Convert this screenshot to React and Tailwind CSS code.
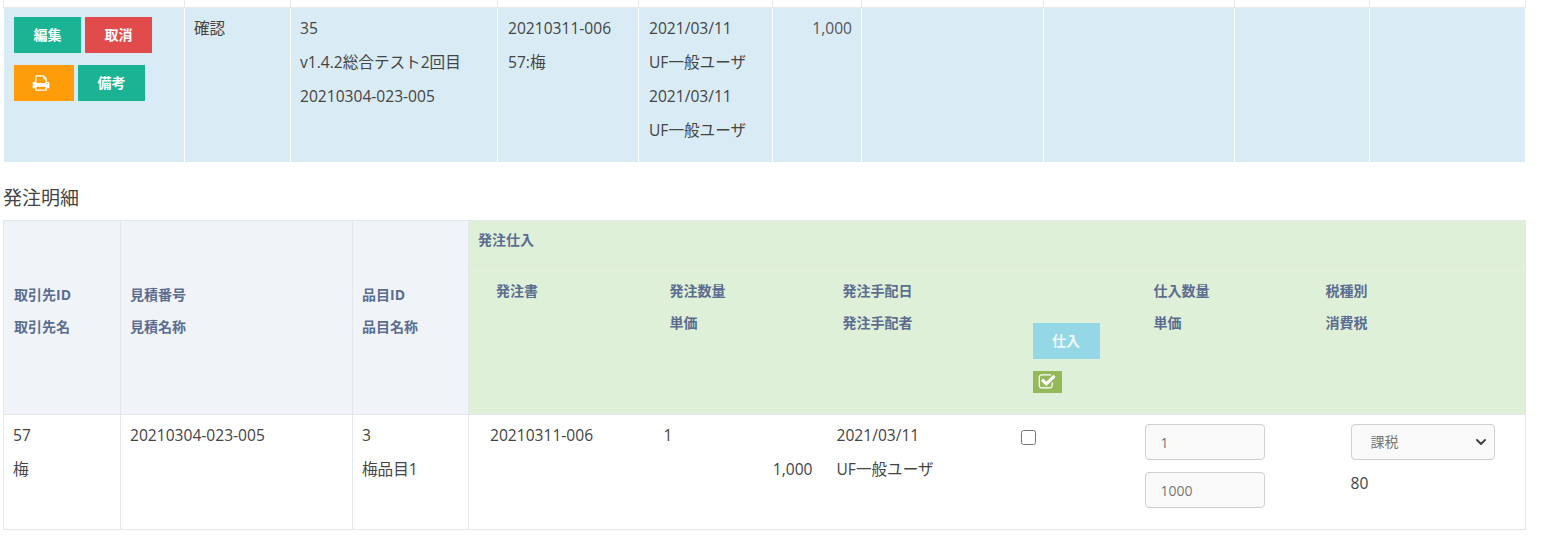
import React from 'react';
import { ChevronDown } from 'lucide-react';

const FONT = "font-['Open_Sans','Noto_Sans_CJK_JP',sans-serif]";

const PrintIcon = () => (
    <svg viewBox="0 0 1792 1792" className="size-[18px]" fill="currentColor">
        <path d="M448 1536h896v-256h-896v256zm0-640h896v-384h-160q-40 0-68-28t-28-68v-160h-640v640zm1152 64q0-26-19-45t-45-19-45 19-19 45 19 45 45 19 45-19 19-45zm128 0v416q0 13-9.5 22.5t-22.5 9.5h-224v160q0 40-28 68t-68 28h-960q-40 0-68-28t-28-68v-160h-224q-13 0-22.5-9.5t-9.5-22.5v-416q0-79 56.5-135.5t135.5-56.5h64v-544q0-40 28-68t68-28h672q40 0 88 20t76 48l152 152q28 28 48 76t20 88v256h64q79 0 135.5 56.5t56.5 135.5z" />
    </svg>
);

const CheckIcon = () => (
    <svg viewBox="0 0 1792 1792" className="size-[18px]" fill="currentColor">
        <path d="M1472 930v318q0 119-84.5 203.5t-203.5 84.5h-832q-119 0-203.5-84.5t-84.5-203.5v-832q0-119 84.5-203.5t203.5-84.5h832q63 0 117 25 15 7 18 23 3 17-9 29l-49 49q-10 10-23 10-3 0-9-2-23-6-45-6h-832q-66 0-113 47t-47 113v832q0 66 47 113t113 47h832q66 0 113-47t47-113v-254q0-13 9-22l64-64q10-10 23-10 6 0 12 3 20 8 20 29zm231-489l-814 814q-24 24-57 24t-57-24l-430-430q-24-24-24-57t24-57l110-110q24-24 57-24t57 24l263 263 647-647q24-24 57-24t57 24l110 110q24 24 24 57t-24 57z" />
    </svg>
);

const Btn = ({ className, children }) => (
    <button className={`h-9 flex items-center justify-center text-white text-sm font-bold ${className}`}>
        {children}
    </button>
);

const topWidths = [181, 106, 207, 141, 134, 89, 182, 191, 135, 156];
const detailWidths = [117, 232, 116, 173, 173, 191, 120, 173, 227];

const blueCell = "border-x border-white align-top pt-[3px] pl-[10px] pr-[9px] leading-[34px]";
const sideHead = "border border-[#e3e6ea] bg-[#f0f4f9] align-middle text-left pr-2 pb-[14px] leading-[32px] text-sm font-bold text-[#5a6d90]";
const greenHead = "bg-[#dff0d8] align-top text-left pt-1 leading-[32px] text-sm font-bold text-[#5a6d90]";
const bodyCell = "align-top pt-[3px] leading-[34px]";
const field = "block h-9 border border-[#cfcfcf] rounded-[4px] bg-[#f9f9f9] text-sm text-[#777] outline-none";

function Colgroup({ widths }) {
    return (
        <colgroup>
            {widths.map((w, i) => (
                <col key={i} style={{ width: w }} />
            ))}
        </colgroup>
    );
}

export default function App() {
    return (
        <div className={`${FONT} bg-white min-h-[536px] pl-[3px] text-[15.6px] text-[#444]`}>
            <table className="table-fixed border-collapse w-[1522px]">
                <Colgroup widths={topWidths} />
                <tbody>
                    <tr className="h-[7px]">
                        {topWidths.map((_, i) => (
                            <td key={i} className="border-x border-b border-[#e7eaec] p-0"></td>
                        ))}
                    </tr>
                    <tr className="h-[155px] bg-[#d9ecf5]">
                        <td className="border-x border-white align-top pt-[9px] pl-[10px]">
                            <div className="flex gap-1">
                                <Btn className="w-[67px] bg-[#1ab394]">編集</Btn>
                                <Btn className="w-[67px] bg-[#e14b4b]">取消</Btn>
                            </div>
                            <div className="flex gap-1 mt-3">
                                <Btn className="w-[60px] pr-[6px] bg-[#ff9c0a]"><PrintIcon /></Btn>
                                <Btn className="w-[67px] bg-[#1ab394]">備考</Btn>
                            </div>
                        </td>
                        <td className="border-x border-white align-top pt-[3px] pl-[9px] leading-[34px]">確認</td>
                        <td className="border-x border-white align-top pt-[3px] pl-[9px] leading-[34px]">
                            <div>35</div>
                            <div>v1.4.2総合テスト2回目</div>
                            <div>20210304-023-005</div>
                        </td>
                        <td className={blueCell}>
                            <div>20210311-006</div>
                            <div>57:梅</div>
                        </td>
                        <td className={blueCell}>
                            <div>2021/03/11</div>
                            <div>UF一般ユーザ</div>
                            <div>2021/03/11</div>
                            <div>UF一般ユーザ</div>
                        </td>
                        <td className={`${blueCell} text-right text-[#555]`}>1,000</td>
                        <td className={blueCell}></td>
                        <td className={blueCell}></td>
                        <td className={blueCell}></td>
                        <td className={blueCell}></td>
                    </tr>
                </tbody>
            </table>

            <h3 className="mt-[22px] mb-2 text-[19px] leading-[28px] font-normal text-[#444]">発注明細</h3>

            <table className="table-fixed border-collapse w-[1522px]">
                <Colgroup widths={detailWidths} />
                <thead>
                    <tr className="h-[50px]">
                        <th rowSpan={2} className={`${sideHead} pl-[10px]`}>
                            <div>取引先ID</div>
                            <div>取引先名</div>
                        </th>
                        <th rowSpan={2} className={`${sideHead} pl-[9px]`}>
                            <div>見積番号</div>
                            <div>見積名称</div>
                        </th>
                        <th rowSpan={2} className={`${sideHead} pl-[9px]`}>
                            <div>品目ID</div>
                            <div>品目名称</div>
                        </th>
                        <th colSpan={6} className="border-t border-r border-b border-t-[#e3e6ea] border-r-[#e3e6ea] border-b-[#e6efe2] bg-[#dff0d8] align-top text-left pt-[3px] pl-[9px] leading-[32px] text-sm font-bold text-[#5a6d90]">
                            発注仕入
                        </th>
                    </tr>
                    <tr className="h-[144px]">
                        <th className={`${greenHead} pl-[27px]`}>発注書</th>
                        <th className={`${greenHead} pl-7`}>
                            <div>発注数量</div>
                            <div>単価</div>
                        </th>
                        <th className={`${greenHead} pl-7`}>
                            <div>発注手配日</div>
                            <div>発注手配者</div>
                        </th>
                        <th className="bg-[#dff0d8] align-top pt-[52px] pl-[27px]">
                            <button className="block w-[67px] h-9 bg-[#94d7e7] text-[#eef9fb] text-sm font-bold">仕入</button>
                            <button className="mt-3 flex items-center justify-center w-[29px] h-[22px] bg-[#94b85a] text-white">
                                <CheckIcon />
                            </button>
                        </th>
                        <th className={`${greenHead} pl-7`}>
                            <div>仕入数量</div>
                            <div>単価</div>
                        </th>
                        <th className={`${greenHead} pl-[27px] border-r border-r-[#e3e6ea]`}>
                            <div>税種別</div>
                            <div>消費税</div>
                        </th>
                    </tr>
                </thead>
                <tbody>
                    <tr className="h-[115px]">
                        <td className={`${bodyCell} border border-[#e3e6ea] pl-[9px]`}>
                            <div>57</div>
                            <div>梅</div>
                        </td>
                        <td className={`${bodyCell} border border-[#e3e6ea] pl-[9px]`}>20210304-023-005</td>
                        <td className={`${bodyCell} border border-[#e3e6ea] pl-[9px]`}>
                            <div>3</div>
                            <div>梅品目1</div>
                        </td>
                        <td className={`${bodyCell} border-y border-l border-[#e3e6ea] pl-[21px]`}>20210311-006</td>
                        <td className={`${bodyCell} border-y border-[#e3e6ea] pl-[22px] pr-[2px]`}>
                            <div>1</div>
                            <div className="text-right">1,000</div>
                        </td>
                        <td className={`${bodyCell} border-y border-[#e3e6ea] pl-[22px]`}>
                            <div>2021/03/11</div>
                            <div>UF一般ユーザ</div>
                        </td>
                        <td className="border-y border-[#e3e6ea] align-top pt-[15px] pl-[15px]">
                            <input type="checkbox" className="block size-[15px]" />
                        </td>
                        <td className="border-y border-[#e3e6ea] align-top pt-[9px] pl-[19px]">
                            <input readOnly value="1" className={`${field} w-[120px] pl-[15px]`} />
                            <input readOnly value="1000" className={`${field} w-[120px] pl-[15px] mt-3`} />
                        </td>
                        <td className="border-y border-r border-[#e3e6ea] align-top pt-[9px] pl-[52px]">
                            <div className="relative w-[144px]">
                                <select className={`${field} w-full pl-[19px] appearance-none`} defaultValue="課税">
                                    <option>課税</option>
                                </select>
                                <ChevronDown className="absolute right-[6px] top-[10px] size-[16px] text-[#444]" strokeWidth={3} />
                            </div>
                            <div className="mt-[6px] leading-[34px]">80</div>
                        </td>
                    </tr>
                </tbody>
            </table>
        </div>
    );
}
